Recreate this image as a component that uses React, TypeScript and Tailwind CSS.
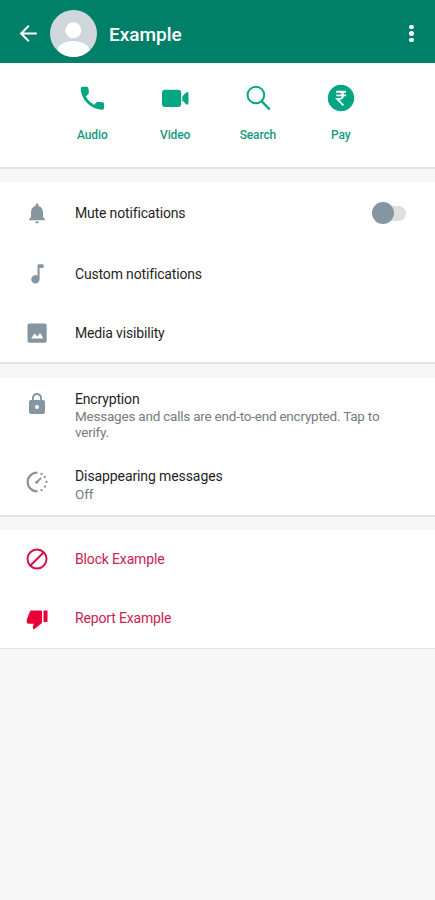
import React, { useState } from 'react';

type IconProps = { className?: string };

const BackIcon = ({ className }: IconProps) => (
  <svg viewBox="0 0 24 24" className={className} fill="none" stroke="currentColor" strokeWidth="2">
    <path d="M20.8 11.5H5.5M12.8 3.8L5.1 11.5l7.7 7.7" />
  </svg>
);

const PhoneIcon = ({ className }: IconProps) => (
  <svg viewBox="0 0 30 30" className={className} fill="currentColor">
    <path d="M5.600 3.700h4.100c1 0 1.600.6 1.700 1.500l.5 4.400c.1.600-.1 1.100-.5 1.500l-2.500 2.500c2 3.700 4.500 6.200 8.200 8.100l2.500-2.500c.4-.4.900-.6 1.500-.5l4.400.5c.9.100 1.500.8 1.500 1.700v4c0 1.100-.8 1.800-1.900 1.800C13.500 26.200 4.100 16.800 3.700 5.600c0-1.100.8-1.900 1.900-1.900z" />
  </svg>
);

const VideoIcon = ({ className }: IconProps) => (
  <svg viewBox="0 0 30 30" className={className} fill="currentColor">
    <rect x="2" y="6.8" width="19.2" height="17.2" rx="3" />
    <path d="M22.300 13.600l3.700-4.100q2.500-1.200 2.500 1.200v9.400q0 2.400-2.500 1.200l-3.700-4.100z" />
  </svg>
);

const SearchIcon = ({ className }: IconProps) => (
  <svg viewBox="0 0 30 30" className={className} fill="none" stroke="currentColor">
    <circle cx="12.9" cy="12" r="8.3" strokeWidth="2" />
    <path d="M18.500 18l8.200 8.500" strokeWidth="2.500" />
  </svg>
);

const RupeeIcon = ({ className }: IconProps) => (
  <svg viewBox="0 0 30 30" className={className}>
    <circle cx="15" cy="15" r="13.2" fill="currentColor" />
    <path
      d="M10.2 8.800h9.800M10.200 12.400h9.800M11 8.800h2.400c4.900 0 4.900 7.100 0 7.100h-2.200l6.200 6.500"
      fill="none"
      stroke="white"
      strokeWidth="1.9"
    />
  </svg>
);

const BellIcon = ({ className }: IconProps) => (
  <svg viewBox="0 0 24 24" className={className} fill="currentColor">
    <path d="M12 22.3c1.1 0 2-.8 2-1.8h-4c0 1 .9 1.8 2 1.8zm6-6v-5c0-3.07-1.64-5.64-4.5-6.32V4c0-.83-.67-1.5-1.5-1.5s-1.5.67-1.5 1.500v.98C7.630 5.660 6 8.220 6 11.300v5l-2 2v1h16v-1l-2-2z" />
  </svg>
);

const NoteIcon = ({ className }: IconProps) => (
  <svg viewBox="0 0 24 24" className={className} fill="currentColor">
    <path d="M12.500 3.600q0-1.300 1.300-1.300h3.600q1.300 0 1.300 1.300v1.200q0 1.300-1.300 1.300h-2.800v11.200a4.200 4.200 0 1 1-2.100-3.600z" />
  </svg>
);

const MediaIcon = ({ className }: IconProps) => (
  <svg viewBox="0 0 24 24" className={className}>
    <rect x="2.500" y="2.500" width="19.200" height="19.200" rx="2" fill="currentColor" />
    <path d="M6.200 17.400l3-4.300q.5-.6 1 0l2 2.700 2.300-3.200q.5-.6 1 0l2.800 4.800z" fill="white" />
  </svg>
);

const LockIcon = ({ className }: IconProps) => (
  <svg viewBox="0 0 24 24" className={className} fill="currentColor">
    <path d="M18 8h-1V6c0-2.760-2.240-5-5-5S7 3.240 7 6v2H6c-1.100 0-2 .9-2 2v10c0 1.100.9 2 2 2h12c1.100 0 2-.9 2-2V10c0-1.100-.9-2-2-2zm-6 9c-1.100 0-2-.9-2-2s.9-2 2-2 2 .9 2 2-.9 2-2 2zm3.100-9H8.900V6c0-1.710 1.390-3.100 3.100-3.100 1.710 0 3.100 1.390 3.100 3.100v2z" />
  </svg>
);

const TimerIcon = ({ className }: IconProps) => (
  <svg viewBox="0 0 24 24" className={className} fill="none" stroke="currentColor">
    <path d="M12.500 2.600H12a9.400 9.400 0 0 0 0 18.800h.5" strokeWidth="2.200" />
    <path
      d="M16.500 4h.01M19.800 7.100h.01M21.400 11.900h.01M20 16.700h.01M16.600 20.200h.01"
      strokeWidth="2.300"
      strokeLinecap="round"
    />
    <path d="M11.700 12.400l3.900-4" strokeWidth="1.900" strokeLinecap="round" />
    <circle cx="11.700" cy="12.300" r="1.500" fill="currentColor" stroke="none" />
  </svg>
);

const BlockIcon = ({ className }: IconProps) => (
  <svg viewBox="0 0 24 24" className={className} fill="none" stroke="currentColor" strokeWidth="1.9">
    <circle cx="12" cy="12" r="9.5" />
    <path d="M5.500 18.500l13-13" />
  </svg>
);

const ThumbDownIcon = ({ className }: IconProps) => (
  <svg viewBox="0 0 24 24" className={className} fill="currentColor">
    <path d="M15.900 3.500H6.800c-1 0-1.700.5-2 1.300L1.900 12.300c-.1.300-.2.500-.2.800v1.600c0 1.200.9 2 2 2h5l-.9 3.400c-.2 1.500.6 2.400 1.700 1.900l6.900-5.600c.4-.4.600-.8.600-1.400V4.600c0-.7-.4-1.100-1.100-1.100zm2.600 0V15h4V3.500z" />
  </svg>
);

const actions = [
  { label: 'Audio', icon: PhoneIcon },
  { label: 'Video', icon: VideoIcon },
  { label: 'Search', icon: SearchIcon },
  { label: 'Pay', icon: RupeeIcon },
];

const App = () => {
  const [muted, setMuted] = useState(false);

  return (
    <div className="min-h-screen bg-[#f7f7f7] font-['Roboto',sans-serif] text-sm tracking-[-0.16px] text-[#1f1f1f]">
      <header className="flex h-[63px] items-center bg-[#018069] pt-1 pr-3 pl-4 text-white">
        <button className="mr-[10px]">
          <BackIcon className="size-6" />
        </button>
        <div className="size-[47px] overflow-hidden rounded-full bg-[#cfd6dc]">
          <svg viewBox="0 0 47 47" className="size-full" fill="white">
            <circle cx="23.3" cy="20.3" r="8" />
            <path d="M7 47V42c0-7.500 9-11 16.300-11S40 34.500 40 42v5z" />
          </svg>
        </div>
        <h1 className="ml-3 flex-1 pt-0.5 text-[19px] leading-6 font-medium tracking-normal">Example</h1>
        <button className="flex w-[23px] flex-col items-center gap-[2.2px]">
          <span className="size-[4.4px] rounded-full bg-white" />
          <span className="size-[4.4px] rounded-full bg-white" />
          <span className="size-[4.4px] rounded-full bg-white" />
        </button>
      </header>

      {/* Quick actions */}
      <div className="flex h-[106px] justify-center border-b-2 border-[#e3e3e3] bg-white pt-5 pr-[2px] text-[#05a783]">
        {actions.map(({ label, icon: Icon }) => (
          <button key={label} className="flex w-[82.8px] flex-col items-center">
            <Icon className="size-[30px]" />
            <span className="mt-[14px] text-xs leading-4 font-medium tracking-[-0.12px] text-[#159b7d]">{label}</span>
          </button>
        ))}
      </div>

      {/* Notifications and media */}
      <section className="mt-[13px] h-[182px] border-b-2 border-[#e3e3e3] bg-white">
        <div className="flex h-[62px] items-center pr-[29px] pl-[25px]">
          <BellIcon className="size-6 text-[#8696a0]" />
          <span className="ml-[26px] flex-1">Mute notifications</span>
          <button
            role="switch"
            aria-checked={muted}
            aria-label="Mute notifications"
            onClick={() => setMuted(!muted)}
            className={`flex h-[15px] w-[34px] items-center rounded-full bg-[#dedede] ${muted ? 'justify-end' : 'justify-start'}`}
          >
            <span className={`size-[22px] shrink-0 rounded-full ${muted ? 'bg-[#05a783]' : 'bg-[#8696a0]'}`} />
          </button>
        </div>
        <div className="flex h-[60px] items-center pl-[25px]">
          <NoteIcon className="size-6 text-[#8696a0]" />
          <span className="ml-[26px]">Custom notifications</span>
        </div>
        <div className="flex h-[58px] items-center pl-[25px]">
          <MediaIcon className="size-6 text-[#8696a0]" />
          <span className="ml-[26px]">Media visibility</span>
        </div>
      </section>

      {/* Privacy */}
      <section className="mt-[14px] h-[139px] border-b-2 border-[#e3e3e3] bg-white pt-3 pl-[25px]">
        <div className="flex h-[77px]">
          <LockIcon className="mt-[2px] size-6 text-[#8696a0]" />
          <div className="ml-[26px]">
            <p className="leading-[19px]">Encryption</p>
            <p className="w-[320px] text-[13.5px] leading-[15.5px] tracking-[-0.22px] text-[#767b7e]">
              Messages and calls are end-to-end encrypted. Tap to verify.
            </p>
          </div>
        </div>
        <div className="flex">
          <TimerIcon className="mt-[3px] size-6 text-[#8b9194]" />
          <div className="ml-[26px]">
            <p className="leading-[19px] tracking-[-0.1px]">Disappearing messages</p>
            <p className="text-[13.5px] leading-[17px] text-[#767b7e]">Off</p>
          </div>
        </div>
      </section>

      {/* Block and report */}
      <section className="mt-[13px] h-[119px] border-b border-[#e3e3e3] bg-white pl-[25px] text-[#cc2152]">
        <div className="flex h-[58px] items-center">
          <BlockIcon className="size-6 text-[#d80d45]" />
          <span className="ml-[26px]">Block Example</span>
        </div>
        <div className="flex h-[60px] items-center">
          <ThumbDownIcon className="mt-[2px] size-6 text-[#ea0038]" />
          <span className="ml-[26px]">Report Example</span>
        </div>
      </section>
    </div>
  );
};

export default App;
